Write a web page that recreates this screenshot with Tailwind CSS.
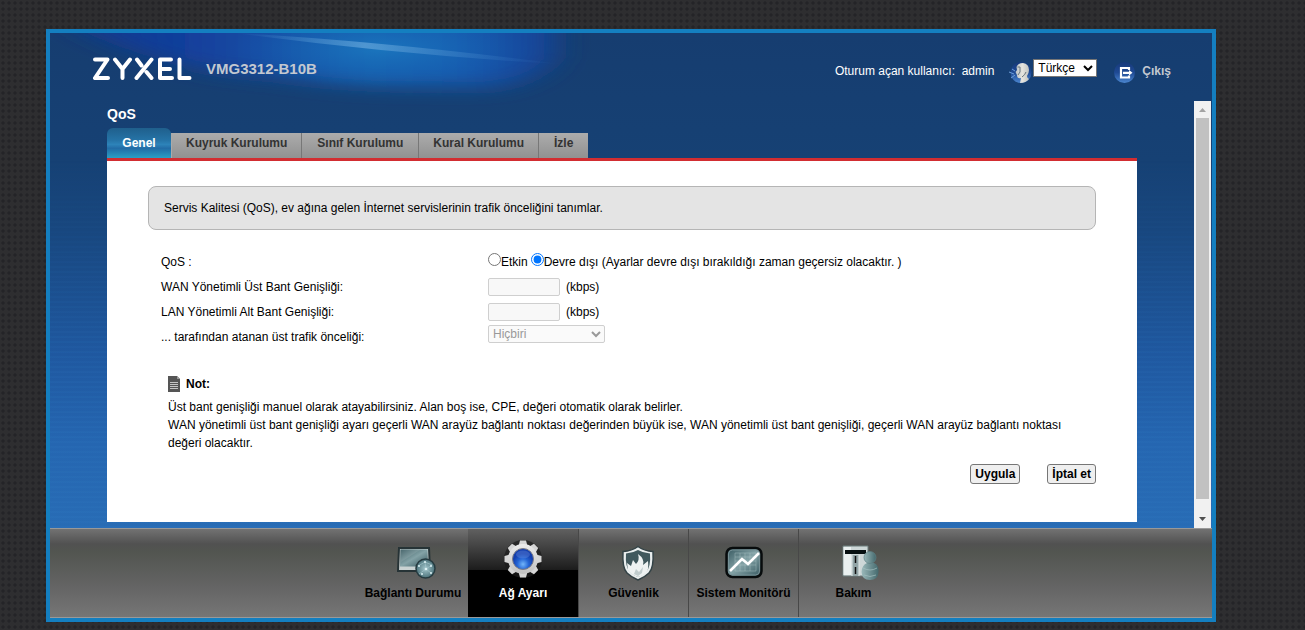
<!DOCTYPE html>
<html lang="tr">
<head>
<meta charset="utf-8">
<meta name="viewport" content="width=device-width, initial-scale=1">
<title>QoS</title>
<script src="https://cdn.jsdelivr.net/npm/@tailwindcss/browser@4"></script>
</head>
<body class="min-h-screen bg-[#2e2e30] bg-[radial-gradient(#242427_30%,transparent_50%)] bg-size-[6px_6px] pt-[29px] pr-[89px] pb-2 pl-[46px] font-['Liberation_Sans',Arial,sans-serif] text-xs text-black">
<div class="border-4 border-[#147fc0] bg-[#163f72]">
  <div class="relative bg-[linear-gradient(to_bottom,#163d70,#164174_26%,#18477f_40%,#1f58a0_65%,#2566b1_83%,#286cb5)]">
    <div class="absolute inset-0 bg-[repeating-linear-gradient(to_bottom,transparent_0px,transparent_3px,rgba(50,125,195,0.3)_4px,transparent_5px)] mask-[linear-gradient(to_bottom,transparent_25%,black_80%)]"></div>
    <svg class="absolute top-0 left-0" width="560" height="90" viewBox="0 0 560 90" aria-hidden="true">
      <defs>
        <filter id="soft" x="-30%" y="-60%" width="160%" height="220%"><feGaussianBlur stdDeviation="16 9"/></filter>
        <linearGradient id="g1"><stop offset="0" stop-color="#1037a0" stop-opacity=".6"/><stop offset=".25" stop-color="#123f9c"/><stop offset=".6" stop-color="#155fae"/><stop offset=".8" stop-color="#165aae"/><stop offset="1" stop-color="#144296"/></linearGradient>
        <radialGradient id="g2"><stop offset="0" stop-color="#1c7cc2" stop-opacity=".75"/><stop offset="1" stop-color="#1668b8" stop-opacity="0"/></radialGradient>
        <linearGradient id="g3"><stop offset="0" stop-color="#5aa0d8" stop-opacity="0"/><stop offset=".4" stop-color="#72afe0" stop-opacity=".6"/><stop offset="1" stop-color="#3b80c8" stop-opacity="0"/></linearGradient>
      </defs>
      <path d="M20 -40H505V25Q480 60 400 54Q300 56 230 44Q110 38 20 -8Z" fill="url(#g1)" filter="url(#soft)"/>
      <ellipse cx="330" cy="16" rx="150" ry="38" fill="url(#g2)"/>
      <path d="M185 0Q330 8 510 31Q350 22 185 0Z" fill="url(#g3)"/>
    </svg>

    <header class="relative flex h-[68px] items-start pl-[43px] pr-[41px]">
      <svg class="mt-[24px]" width="100" height="24" viewBox="0 0 100 24" fill="none" stroke="#fff" stroke-width="4" stroke-linecap="round" stroke-linejoin="round" role="img" aria-label="ZYXEL">
        <path d="M2 2.500H14.500L2 21H15M22 2.500L29.500 12V21M37 2.500L29.500 12M44 2.500L48.500 8.500M53.500 15L58.500 21M58.500 2.500L43.500 21M78 2.500H67V21H79M67 12H77M86.500 2.500V21H96.500"/>
      </svg>
      <span class="mt-[26px] ml-[13px] text-[15px] leading-5 font-bold text-[#c3c8d0]">VMG3312-B10B</span>
      <div class="ml-auto flex items-start text-white">
        <span class="mt-[30px] whitespace-pre leading-4">Oturum açan kullanıcı:  admin</span>
        <svg class="mt-[28px] ml-[15px]" width="23" height="23" viewBox="0 0 23 23" aria-hidden="true">
          <defs><linearGradient id="b" x2="0" y2="1"><stop stop-color="#17397a"/><stop offset=".5" stop-color="#1f4a94"/><stop offset="1" stop-color="#4b86d0"/></linearGradient>
          <linearGradient id="h"><stop stop-color="#b8c0c4"/><stop offset=".5" stop-color="#e6e5df"/><stop offset="1" stop-color="#c2c5c2"/></linearGradient></defs>
          <circle cx="12" cy="11.500" r="10.500" fill="url(#b)"/>
          <path d="M7.500 6Q9 2 14 2Q20 3 20 9Q20 12 18 15Q18 17 20 18Q17 22 11 22L12 17Q8 18 8 14L6.500 11L8 9Z" fill="url(#h)"/>
          <path d="M8.500 6H11V11L9 14M13 16Q16 14 17 11" stroke="#69767e" fill="none"/>
          <path d="M0 11L5 13M2 17L6 14M3 8L6 10" stroke="#6fa0da" fill="none"/>
        </svg>
        <select aria-label="Dil" class="mt-[26px] ml-px h-[18px] w-16 border border-[#767676] bg-white text-xs text-black"><option>Türkçe</option></select>
        <a href="#" class="flex items-start font-bold text-[#c3c8d0]">
          <svg class="mt-[28px] ml-4" width="23" height="23" viewBox="0 0 23 23" fill="none" aria-hidden="true"><circle cx="11.500" cy="11.500" r="10.500" fill="url(#b)"/><path d="M16 9V7H8V16.500H16V14.500M10 11.800H18" stroke="#fff" stroke-width="2.200"/><path d="M16 9L19.500 11.800L16 14.500Z" fill="#fff"/></svg>
          <span class="mt-[30px] ml-[6px] leading-4">Çıkış</span>
        </a>
      </div>
    </header>

    <div class="relative flex pr-px">
      <main class="min-w-0 flex-1 pr-[57px] pb-[6px] pl-[57px]">
        <h1 class="pt-[3px] text-sm leading-5 font-bold text-white">QoS</h1>
        <nav class="mt-1 box-content flex h-[30px] items-end border-b-[3px] border-[#d22d31] font-bold text-[#333]">
          <a href="#" class="h-[30px] w-16 rounded-t-md bg-[linear-gradient(#1f5f8c,#2573a6_40%,#2d83b9_55%,#226ca6_68%,#2b9fc5)] pt-[7px] text-center leading-4 text-white">Genel</a>
          <a href="#" class="h-[25px] border-l border-[#aaa] bg-linear-to-b from-[#acacac] to-[#919191] px-[14px] pt-[2px] leading-4">Kuyruk Kurulumu</a>
          <a href="#" class="h-[25px] border-l border-[#777] bg-linear-to-b from-[#acacac] to-[#919191] px-[15px] pt-[2px] leading-4">Sınıf Kurulumu</a>
          <a href="#" class="h-[25px] border-l border-[#777] bg-linear-to-b from-[#acacac] to-[#919191] px-[14px] pt-[2px] leading-4">Kural Kurulumu</a>
          <a href="#" class="h-[25px] border-l border-[#777] bg-linear-to-b from-[#acacac] to-[#919191] px-[15px] pt-[2px] leading-4">İzle</a>
        </nav>
        <form class="bg-white px-[41px] pt-[25px] pb-[38px]">
          <p class="rounded-lg border border-[#b5b5b5] bg-[#e4e4e4] px-[15px] py-[13px] leading-4">Servis Kalitesi (QoS), ev ağına gelen İnternet servislerinin trafik önceliğini tanımlar.</p>
          <div class="mt-[19px] grid grid-cols-[327px_1fr] auto-rows-[25px] items-center pl-[13px] leading-4">
            <span>QoS :</span>
            <div class="flex items-center">
              <input id="on" type="radio" name="qos" class="mb-1 size-[13px]"><label for="on">Etkin</label>
              <input id="off" type="radio" name="qos" checked class="mb-1 ml-[3px] size-[13px]"><label for="off">Devre dışı (Ayarlar devre dışı bırakıldığı zaman geçersiz olacaktır. )</label>
            </div>
            <label for="wan">WAN Yönetimli Üst Bant Genişliği:</label>
            <div class="flex items-center gap-[6px]"><input id="wan" disabled class="h-[18px] w-[72px] rounded-xs border border-[#cfcfcf] bg-[#f8f8f8]"><span>(kbps)</span></div>
            <label for="lan">LAN Yönetimli Alt Bant Genişliği:</label>
            <div class="flex items-center gap-[6px]"><input id="lan" disabled class="h-[18px] w-[72px] rounded-xs border border-[#cfcfcf] bg-[#f8f8f8]"><span>(kbps)</span></div>
            <label for="pri">... tarafından atanan üst trafik önceliği:</label>
            <select id="pri" disabled class="mb-[6px] h-[18px] w-[117px] rounded-xs border border-[#cfcfcf] bg-[#fafafa] text-[#999] opacity-100"><option>Hiçbiri</option></select>
          </div>
          <div class="mt-[27px] pl-5">
            <h2 class="flex items-center gap-[6px] leading-4 font-bold">
              <svg width="12" height="16" viewBox="0 0 12 16" aria-hidden="true"><path d="M0 0H9L12 3V16H0Z" fill="#555"/><path d="M9 0V3H12" fill="#999"/><path d="M2 6.500H10M2 8.500H10M2 10.500H10M2 12.500H10" stroke="#c4c4c4"/></svg>
              Not:</h2>
            <p class="mt-[6px] leading-[18px]">Üst bant genişliği manuel olarak atayabilirsiniz. Alan boş ise, CPE, değeri otomatik olarak belirler.<br>WAN yönetimli üst bant genişliği ayarı geçerli WAN arayüz bağlantı noktası değerinden büyük ise, WAN yönetimli üst bant genişliği, geçerli WAN arayüz bağlantı noktası değeri olacaktır.</p>
          </div>
          <div class="mt-3 flex justify-end gap-[27px]">
            <button type="submit" class="h-5 rounded-[3px] border border-[#767676] bg-[#efefef] px-1 font-bold leading-4">Uygula</button>
            <button type="reset" class="h-5 rounded-[3px] border border-[#767676] bg-[#efefef] px-1 font-bold leading-4">İptal et</button>
          </div>
        </form>
      </main>
      <div class="flex w-[17px] flex-col items-center justify-between bg-[#f1f1f1]" aria-hidden="true">
        <svg class="shrink-0" width="17" height="17"><path d="M5 11H12L8.500 7Z" fill="#a3a3a3"/></svg>
        <div class="mb-3 w-[13px] flex-1 bg-[#c1c1c1]"></div>
        <svg class="shrink-0" width="17" height="17"><path d="M5 6H12L8.500 10Z" fill="#505050"/></svg>
      </div>
    </div>
  </div>

  <nav class="flex h-[90px] justify-center border-y border-[#999] bg-[linear-gradient(#727272,#515151_17%,#525550_26%,#646464_65%,#767676)] pr-px pl-[5px] font-bold leading-4">
    <a href="#" class="flex w-[110px] flex-col items-center pt-4">
      <svg class="ml-2" width="40" height="36" viewBox="0 0 40 36" aria-hidden="true"><defs><linearGradient id="t" x2="1" y2="1"><stop stop-color="#34555c"/><stop offset=".5" stop-color="#83a2a6"/><stop offset="1" stop-color="#34555c"/></linearGradient><radialGradient id="w"><stop stop-color="#a3c6cc"/><stop offset="1" stop-color="#4c737b"/></radialGradient></defs>
        <path d="M2 3H32L33 26H1Z" fill="#c9d2d2" stroke="#263336" stroke-width="2"/><path d="M3.500 4.500H30.500L31 21.500H3Z" fill="url(#t)"/><path d="M4 5H23L4 17Z" fill="#fff" opacity=".1"/><circle cx="28.500" cy="23.500" r="9.500" fill="url(#w)" stroke="#263b40" stroke-width="1.500"/><path d="M21 21L28 17L35 20L29 24L34 28M22 29L29 24L28 17" stroke="#9fc3c9" stroke-width=".7" fill="none"/><g fill="#def2f4"><circle cx="28" cy="17" r="1"/><circle cx="22" cy="21" r="1"/><circle cx="29" cy="24" r="1.300"/><circle cx="34" cy="21" r="1"/><circle cx="25" cy="29" r="1"/><circle cx="34" cy="28" r="1"/></g></svg>
      <span class="mt-1 whitespace-nowrap">Bağlantı Durumu</span>
    </a>
    <a href="#" aria-current="page" class="flex w-[110px] flex-col items-center bg-[linear-gradient(#606060,#1d1d1d_46%,#000_47%)] pt-[9px] text-white">
      <svg width="42" height="42" viewBox="-21 -21 42 42" aria-hidden="true"><defs><linearGradient id="s" gradientUnits="userSpaceOnUse" x1="0" y1="-18" x2="0" y2="18"><stop stop-color="#f0f0f0"/><stop offset="1" stop-color="#bdbdbd"/></linearGradient><radialGradient id="o" cy=".75"><stop stop-color="#72b5fa"/><stop offset=".55" stop-color="#2464d4"/><stop offset="1" stop-color="#143fae"/></radialGradient></defs>
        <circle r="19" fill="#1b1b1b" opacity=".7"/><g fill="#d6d6d6"><path id="k" d="M-4.500 -13L-3 -18.500H3L4.500 -13ZM-4.500 13L-3 18.500H3L4.500 13Z"/><use href="#k" transform="rotate(45)"/><use href="#k" transform="rotate(90)"/><use href="#k" transform="rotate(135)"/></g><circle r="15" fill="url(#s)"/><circle r="10.500" fill="url(#o)" stroke="#7d7d85" stroke-width="1"/><ellipse cy="-4.500" rx="7" ry="4" fill="#94b3f4" opacity=".25"/></svg>
      <span class="mt-[5px]">Ağ Ayarı</span>
    </a>
    <a href="#" class="flex w-[110px] flex-col items-center border-l border-[#484848] pt-4">
      <svg class="ml-2" width="36" height="36" viewBox="0 0 36 36" aria-hidden="true"><path d="M18 1.500Q24 6 33 6.500Q34 23 29 28Q25 32 18 35Q11 32 7 28Q2 23 3 6.500Q12 6 18 1.500Z" fill="#e9eeee" stroke="#334246" stroke-width="1.500"/><path d="M18 5Q23 8 30 8.500Q31 22 26 27Q23 30 18 32Q13 30 10 27Q5 22 6 8.500Q13 8 18 5Z" fill="#40585d"/><path d="M18 32Q10 29 8 25L7 18L11 21L13 15L16 19Q20 15 18 9Q25 14 23 20L28 16Q29 25 26 28Q22 31 18 32Z" fill="#eef2f2"/><path d="M14 29L16 24L19 27L23 22L22 28L18 31Z" fill="#c0cccd"/></svg>
      <span class="mt-1">Güvenlik</span>
    </a>
    <a href="#" class="flex w-[110px] flex-col items-center border-l border-[#484848] pt-4">
      <svg width="38" height="36" viewBox="0 0 38 36" aria-hidden="true"><rect x="1.500" y="3" width="35" height="29" rx="6" fill="url(#t)" stroke="#080c0d" stroke-width="2.500"/><rect x="3.500" y="5" width="31" height="25" rx="4" fill="none" stroke="#779196"/><path d="M10 8H31V26H10ZM10 12H31M10 16H31M10 20H31M15 8V26M20 8V26M25 8V26" fill="none" stroke="#b7d1d2" stroke-width=".7" opacity=".5"/><path d="M5 26L17 14L23 19L34 8" fill="none" stroke="#fff" stroke-width="2.600"/></svg>
      <span class="mt-1 whitespace-nowrap">Sistem Monitörü</span>
    </a>
    <a href="#" class="flex w-[110px] flex-col items-center border-l border-[#484848] pt-4">
      <svg class="ml-3" width="38" height="36" viewBox="0 0 38 36" aria-hidden="true"><defs><linearGradient id="p"><stop stop-color="#9ab9ba"/><stop offset="1" stop-color="#44696d"/></linearGradient></defs><path d="M2 1H27V31H2Z" fill="#cdd7d7" stroke="#6d7c7d"/><path d="M2.500 2H10V30H2.500Z" fill="#eaf0f0"/><path d="M11 10H18V31H11Z" fill="#93a5a7"/><path d="M11 10V31M18 10V31" stroke="#e4eaea"/><path d="M4 5H25V9H4Z" fill="#071011"/><path d="M14.500 11V18M14.500 22V29" stroke="#111" stroke-width="1.500"/><path d="M20.500 27Q21 20 26 18H33Q38 20 37.500 27Q37 35 29 35Q21 35 20.500 27Z" fill="url(#p)"/><circle cx="29" cy="12.500" r="6" fill="url(#p)" stroke="#5b8084" stroke-width=".7"/><path d="M22 23Q29 27 36 23M23 30Q29 33 35 30" fill="none" stroke="#a4c0c1" opacity=".7"/></svg>
      <span class="mt-1">Bakım</span>
    </a>
  </nav>
</div>
</body>
</html>
